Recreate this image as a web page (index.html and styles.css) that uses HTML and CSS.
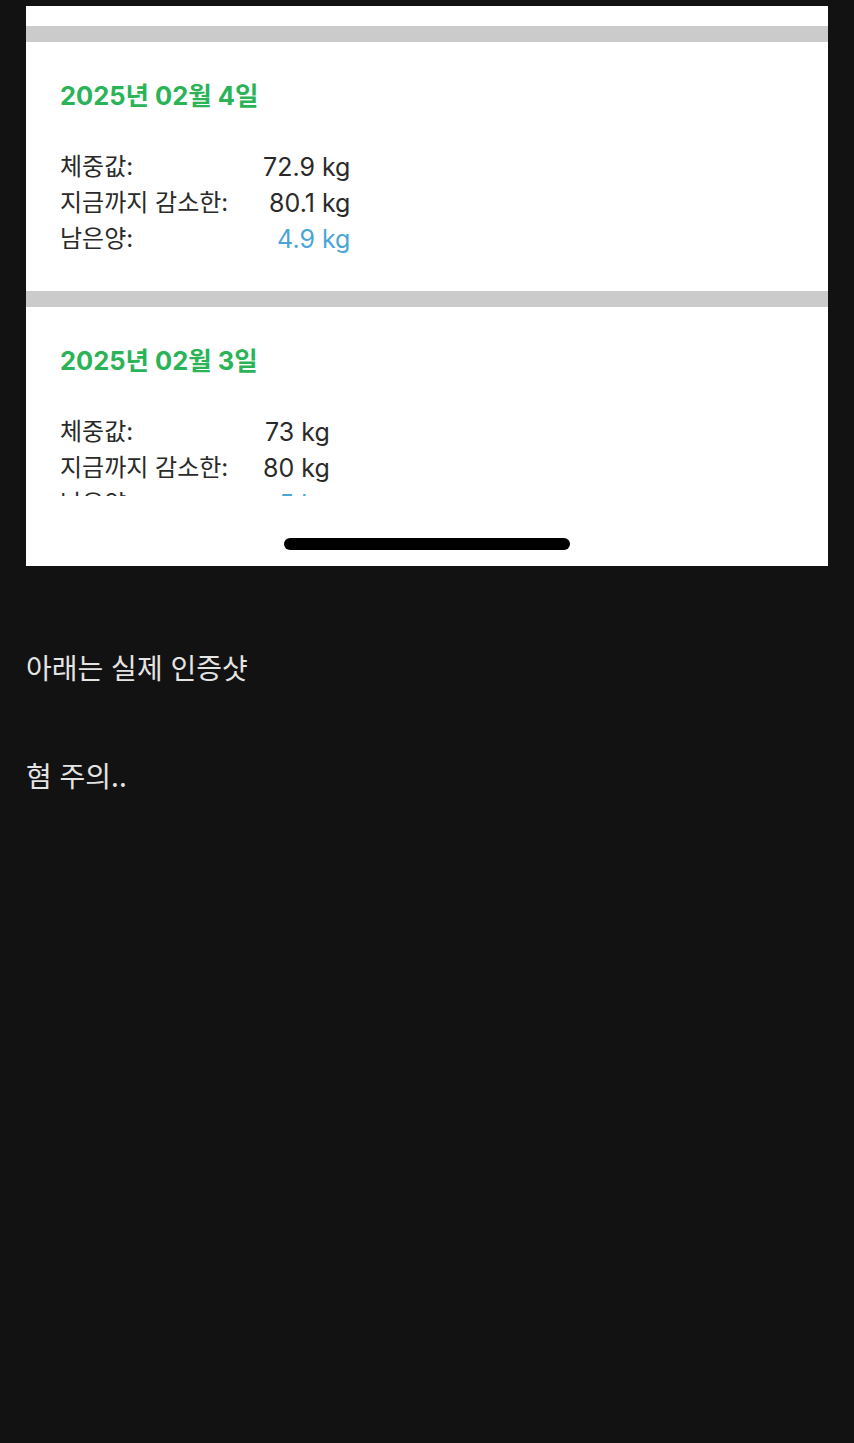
FILE: index.html
```html
<!DOCTYPE html>
<html lang="ko">
  <head>
    <meta charset="UTF-8" />
    <meta name="viewport" content="width=device-width, initial-scale=1.0" />
    <title>다이어트 기록</title>
    <link rel="stylesheet" href="styles.css">
  </head>
  <body>
    <!-- Screenshot of the weight log app -->
    <div class="shot">
      <div class="scroll">
        <div class="top-gap"></div>
        <div class="divider"></div>

        <div class="entry">
          <h2 class="entry-date">2025년 02월 4일</h2>
          <div class="stats">
            <span class="label">체중값:</span>
            <span class="value">72.9 kg</span>
            <span class="label">지금까지 감소한:</span>
            <span class="value">80.1 kg</span>
            <span class="label">남은양:</span>
            <span class="value remain">4.9 kg</span>
          </div>
        </div>

        <div class="divider"></div>

        <div class="entry">
          <h2 class="entry-date">2025년 02월 3일</h2>
          <div class="stats">
            <span class="label">체중값:</span>
            <span class="value">73 kg</span>
            <span class="label">지금까지 감소한:</span>
            <span class="value">80 kg</span>
            <span class="label">남은양:</span>
            <span class="value remain">5 kg</span>
          </div>
        </div>
      </div>

      <div class="home-area">
        <div class="home-indicator"></div>
      </div>
    </div>

    <!-- Post text -->
    <div class="post">
      <p>아래는 실제 인증샷</p>
      <p class="blank">&nbsp;</p>
      <p class="blank">&nbsp;</p>
      <p>혐 주의..</p>
    </div>
  </body>
</html>
```

FILE: styles.css
```css
body {
  background-color: #121212;
  margin: 0;
  padding: 6px 26px 0;
  font-family: "Noto Sans CJK KR", sans-serif;
}
.shot {
  width: 802px;
  height: 560px;
  background-color: #fff;
  overflow: hidden;
}
.scroll {
  height: 490px;
  overflow: hidden;
}
.top-gap {
  height: 20px;
}
.divider {
  height: 16px;
  background-color: #cbcbcb;
}
.entry {
  padding: 39px 34px 34px;
  color: #2a2a2a;
}
.entry-date {
  margin: 0 0 38px;
  font-family: Inter, "Noto Sans CJK KR", sans-serif;
  font-size: 25.5px;
  line-height: 30px;
  font-weight: 700;
  color: #2bb457;
}
.stats {
  display: grid;
  grid-template-columns: 203px auto;
  justify-content: start;
  font-family: Inter, "Noto Sans CJK KR", sans-serif;
  font-size: 24px;
  line-height: 36px;
}
.value {
  text-align: right;
  font-size: 25px;
}
.remain {
  color: #4ba5d6;
}
.home-area {
  height: 70px;
  display: flex;
  justify-content: center;
  padding-top: 42px;
  box-sizing: border-box;
}
.home-indicator {
  width: 286px;
  height: 12px;
  border-radius: 6px;
  background-color: #000;
}
.post {
  margin-top: 83px;
  color: #e4e4e4;
  font-size: 28px;
  line-height: 36px;
}
.post p {
  margin: 0;
}
```
